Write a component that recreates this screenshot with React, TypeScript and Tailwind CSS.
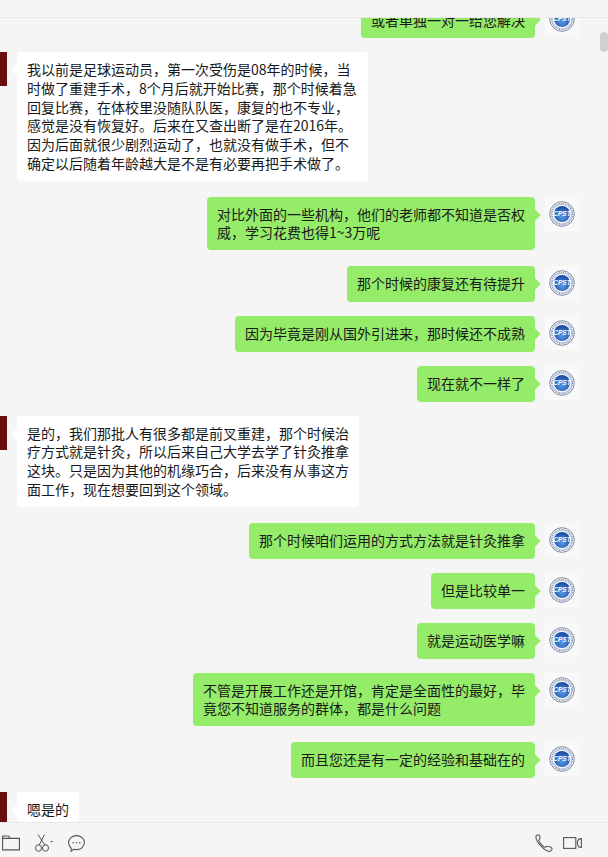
const font = { fontFamily: '"Microsoft YaHei", "Noto Sans CJK SC", "Liberation Sans", sans-serif' };

type Msg = { me: boolean; lines: string[]; gap: string; wide?: boolean };

const messages: Msg[] = [
  { me: true, lines: ["或者单独一对一给您解决"], gap: "mt-[-16px]" },
  {
    me: false,
    gap: "mt-[14px]",
    wide: true,
    lines: [
      "我以前是足球运动员，第一次受伤是08年的时候，当",
      "时做了重建手术，8个月后就开始比赛，那个时候着急",
      "回复比赛，在体校里没随队队医，康复的也不专业，",
      "感觉是没有恢复好。后来在又查出断了是在2016年。",
      "因为后面就很少剧烈运动了，也就没有做手术，但不",
      "确定以后随着年龄越大是不是有必要再把手术做了。",
    ],
  },
  { me: true, gap: "mt-[16px]", lines: ["对比外面的一些机构，他们的老师都不知道是否权", "威，学习花费也得1~3万呢"] },
  { me: true, gap: "mt-[15.5px]", lines: ["那个时候的康复还有待提升"] },
  { me: true, gap: "mt-[14px]", lines: ["因为毕竟是刚从国外引进来，那时候还不成熟"] },
  { me: true, gap: "mt-[14px]", lines: ["现在就不一样了"] },
  {
    me: false,
    gap: "mt-[14px]",
    lines: [
      "是的，我们那批人有很多都是前叉重建，那个时候治",
      "疗方式就是针灸，所以后来自己大学去学了针灸推拿",
      "这块。只是因为其他的机缘巧合，后来没有从事这方",
      "面工作，现在想要回到这个领域。",
    ],
  },
  { me: true, gap: "mt-[16px]", lines: ["那个时候咱们运用的方式方法就是针灸推拿"] },
  { me: true, gap: "mt-[14px]", lines: ["但是比较单一"] },
  { me: true, gap: "mt-[14px]", lines: ["就是运动医学嘛"] },
  { me: true, gap: "mt-[14px]", lines: ["不管是开展工作还是开馆，肯定是全面性的最好，毕", "竟您不知道服务的群体，都是什么问题"] },
  { me: true, gap: "mt-[15.5px]", lines: ["而且您还是有一定的经验和基础在的"] },
  { me: false, gap: "mt-[14px]", lines: ["嗯是的"] },
];

function Logo() {
  return (
    <div className="w-[34px] h-[34px] shrink-0 bg-[#f9f9f9] flex items-center justify-center">
      <svg width="26" height="26" viewBox="0 0 26 26">
        <defs>
          <radialGradient id="ball" cx="50%" cy="65%" r="60%">
            <stop offset="0%" stopColor="#5a9be6" />
            <stop offset="100%" stopColor="#1a4ca6" />
          </radialGradient>
        </defs>
        <circle cx="13" cy="13" r="12.3" fill="#f4f6fa" stroke="#6f80a0" strokeWidth="0.9" />
        <circle cx="13" cy="13" r="10.2" fill="none" stroke="#8796b0" strokeWidth="1.8" strokeDasharray="1 0.8" />
        <circle cx="13" cy="13" r="8" fill="url(#ball)" />
        <text x="13" y="15.200" textAnchor="middle" fontSize="6.500" fontStyle="italic" fontWeight="700" fill="#fff" fontFamily="Liberation Sans, sans-serif">
          CPST
        </text>
      </svg>
    </div>
  );
}

function Bubble({ me, lines, wide }: { me: boolean; lines: string[]; wide?: boolean }) {
  return (
    <div
      className={`relative flex flex-col justify-center min-h-[36px] rounded px-[10px] py-2 text-sm leading-[18.75px] text-[#191919] whitespace-nowrap ${
        me ? "bg-[#95ec69]" : "bg-white"
      } ${wide ? "min-w-[351px]" : ""}`}
    >
      <span
        className={`absolute top-[14px] w-2 h-2 rotate-45 ${me ? "right-[-4px] bg-[#95ec69]" : "left-[-4px] bg-white"}`}
      />
      {lines.map((line) => (
        <div key={line}>{line}</div>
      ))}
    </div>
  );
}

function Row({ msg }: { msg: Msg }) {
  if (msg.me) {
    return (
      <div className={`flex justify-end items-start gap-[10px] pr-[29px] ${msg.gap}`}>
        <Bubble me lines={msg.lines} />
        <Logo />
      </div>
    );
  }
  return (
    <div className={`flex items-start gap-[10px] ${msg.gap}`}>
      <div className="w-[7px] h-[34px] shrink-0 bg-[#6b0d0d]" />
      <Bubble me={false} lines={msg.lines} wide={msg.wide} />
    </div>
  );
}

function Toolbar() {
  return (
    <div className="h-[35px] shrink-0 border-t border-[#e7e7e7] flex items-center justify-between pt-[6px] pl-[2px] pr-[26px] text-[#555]">
      <div className="flex items-center gap-[15px]">
        <svg width="18" height="16" viewBox="0 0 18 16" fill="none" stroke="currentColor" strokeWidth="1.1">
          <path d="M.6 14.9V1h6l1.4 2.4h9.4v11.5zM.6 3.4H8" />
        </svg>
        <svg width="18" height="18" viewBox="0 0 18 18" fill="none" stroke="currentColor" strokeWidth="1">
          <path d="M3 .5 10 11.500M9.500 .5 4 11.500" />
          <ellipse cx="3.500" cy="14" rx="3" ry="3.300" />
          <ellipse cx="10.500" cy="14" rx="3" ry="3.300" />
          <path d="M15 7h3l-1.500 1.500z" fill="currentColor" stroke="none" />
        </svg>
        <svg width="17" height="17" viewBox="0 0 17 17" fill="none" stroke="currentColor" strokeWidth="1.1">
          <path d="M8.500 .6c4.400 0 7.900 3.100 7.900 7s-3.500 7-7.900 7c-.9 0-1.800-.1-2.600-.4L3 16.200l.2-3C1.600 11.900.6 9.900.6 7.600c0-3.900 3.500-7 7.900-7z" />
          <circle cx="5.200" cy="7.800" r=".8" fill="currentColor" stroke="none" />
          <circle cx="8.500" cy="7.800" r=".8" fill="currentColor" stroke="none" />
          <circle cx="11.800" cy="7.800" r=".8" fill="currentColor" stroke="none" />
        </svg>
      </div>
      <div className="flex items-center gap-[10px]">
        <svg width="18" height="18" viewBox="0 0 18 18" fill="none" stroke="currentColor" strokeWidth="1.1">
          <path d="M1 2.200C1.500 1 3 .4 4 .9c.8.5 1.200 3 .8 3.800-.3.600-1 .8-1 1.500 0 1.600 4.600 7 6.300 7 .7 0 1-.8 1.700-.9 1-.2 4.500.9 5 1.700.5 1-.3 2.900-1.700 3.300C10.500 18 .2 8 1 2.200z" />
        </svg>
        <svg width="19" height="12" viewBox="0 0 19 12" fill="none" stroke="currentColor" strokeWidth="1.1">
          <rect x=".6" y=".6" width="12.200" height="10.800" />
          <path d="M18.400 1.600v8.800c-2.400 0-4-1.900-4-4.400s1.600-4.400 4-4.400z" />
        </svg>
      </div>
    </div>
  );
}

export default function App() {
  return (
    <div className="relative w-[608px] h-[857px] flex flex-col overflow-hidden bg-[#f5f5f5]" style={font}>
      <div className="h-[18px] shrink-0 border-b border-[#e7e7e7] relative z-10 bg-[#f5f5f5]" />
      <div className="flex-1 min-h-0 overflow-hidden">
        {messages.map((msg, i) => (
          <Row key={i} msg={msg} />
        ))}
      </div>
      <Toolbar />
      <div className="absolute top-[32px] right-0 w-2 h-5 rounded bg-[#d0d0d0]" />
    </div>
  );
}
